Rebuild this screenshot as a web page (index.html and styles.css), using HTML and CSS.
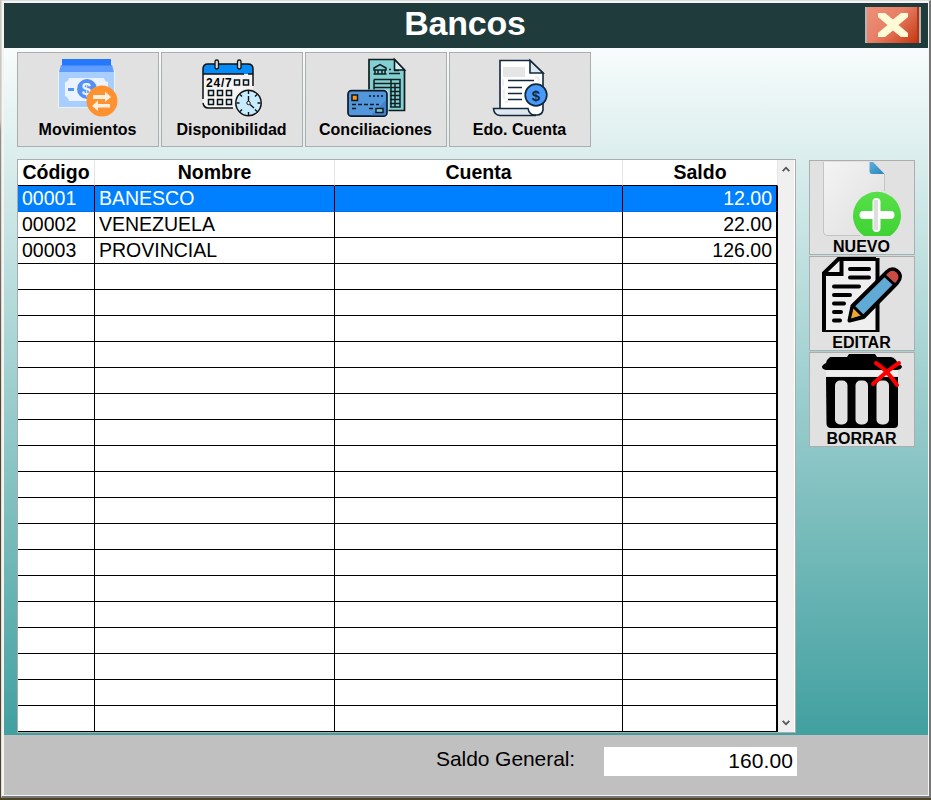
FILE: index.html
```html
<!DOCTYPE html>
<html lang="es">
<head>
<meta charset="utf-8">
<title>Bancos</title>
<link rel="stylesheet" href="styles.css">
</head>
<body>
<div class="window">
  <header class="titlebar">
    <h1>Bancos</h1>
    <button class="close" aria-label="Cerrar">
      <svg width="30" height="24" viewBox="0 0 30 24"><path d="M0 0H7L15 6.500 23 0H30V4L20.500 12 30 20V24H23L15 17.500 7 24H0V20L9.500 12 0 4Z" fill="#fffbd6"/></svg>
    </button>
  </header>
  <main class="body">
    <nav class="toolbar">
      <button class="tool">
        <svg width="64" height="64" viewBox="6 6 64 64">
          <path d="M8.500 20.500H64.500V57.500H8.500Z" fill="#a8cdff" stroke="#e9f3ff"/>
          <path d="M11 15H62L64 22H9Z" fill="#5f9cff"/>
          <path d="M12 9H61V15.500H12Z" fill="#2578fc"/>
          <path d="M19 28H54Q55 32 58 32V47Q55 47 54 51H19Q18 47 15 46V32Q18 32 19 28Z" fill="#eaf3ff"/>
          <path d="M18 38H24V41H18Z" fill="#5590f4"/>
          <circle cx="37" cy="39" r="10" fill="#5590f4"/>
          <text x="36.500" y="45" class="coin-light">$</text>
          <circle cx="52" cy="51" r="15.500" fill="#ff9230"/>
          <path d="M43 45H55V41.500L61 47 55 52V49H43ZM60 54H48V50.500L42 56 48 61V57.500H60Z" fill="#fff0df"/>
        </svg>
        <span>Movimientos</span>
      </button>
      <button class="tool">
        <svg width="64" height="64" viewBox="5 6 64 64">
          <path d="M13 14H53Q58 14 58 19V44L46 58H13Q8 58 8 53V19Q8 14 13 14Z" fill="#f5f5f5"/>
          <path d="M8 24V19Q8 14 13 14H53Q58 14 58 19V24Z" fill="#068cf8"/>
          <path d="M8 49V19Q8 14 13 14H53Q58 14 58 19V36M8 24H49M53 24H58M8 53Q9 58 13 58H38" fill="none" stroke="#111" stroke-width="1.500"/>
          <g fill="#d8d8d8" stroke="#111" stroke-width="1.300"><rect x="20" y="10" width="3.500" height="9" rx="1.700"/><rect x="42.500" y="10" width="3.500" height="9" rx="1.700"/></g>
          <text x="11" y="36.500" class="hours">24/7</text>
          <g fill="#d8f3ff" stroke="#111" stroke-width="1.500"><path d="M39.500 30H44.500V35H39.500ZM48.500 30H53.500V35H48.500ZM13.500 40.500H18.500V45.500H13.500ZM22.500 40.500H27.500V45.500H22.500ZM31.500 40.500H36.500V45.500H31.500ZM13.500 49.500H18.500V54.500H13.500ZM22.500 49.500H27.500V54.500H22.500ZM31.500 49.500H36.500V54.500H31.500Z"/></g>
          <circle cx="53.500" cy="53" r="14" fill="#eee"/>
          <circle cx="53.500" cy="53" r="12.700" fill="#c8ecff" stroke="#111" stroke-width="1.500"/>
          <path d="M53.500 41V44M53.500 62V65M41.500 53H44.500M62.500 53H65.500M45 44.500L47 46.500M62 44.500L60 46.500M45 61.500L47 59.500M62 61.500L60 59.500M53.500 46V51.500M55 54.500L59 58" stroke="#111" stroke-width="1.400"/>
          <circle cx="53.500" cy="53" r="1.700" fill="#fff" stroke="#111"/>
        </svg>
        <span>Disponibilidad</span>
      </button>
      <button class="tool">
        <svg width="64" height="64" viewBox="4 6 64 64">
          <path d="M29 9.500H54.500L64.500 20V60.500H29Z" fill="#82d0d2" stroke="#101e20" stroke-width="1.700"/>
          <path d="M54.500 9.500V20H64.500Z" fill="#d8f0f2" stroke="#101e20" stroke-width="1.600"/>
          <path d="M34 18L40 14.500 46 18V20H34ZM35 20V24M38 20V24M42 20V24M45 20V24M33.500 24H46.500M49 19.500H51M49 23.500H60M54 20.500H59M34 29.500H60V57H50M34 29.500V40M34 33.500H60M34 37.500H60M50 41.500H60M50 45.500H60M50 49.500H60M50 53.500H60M51 29.500V57M55 33.500V57" fill="none" stroke="#101e20" stroke-width="1.500"/>
          <rect x="7" y="39.500" width="41.500" height="28" rx="4" fill="#dff0ff"/>
          <rect x="8" y="40.700" width="39" height="25.500" rx="3.500" fill="#5297dc" stroke="#111722" stroke-width="1.700"/>
          <path d="M31 65.300L46 50V63Q46 65.300 44 65.300Z" fill="#4281cd"/>
          <rect x="12" y="45" width="5.500" height="5.500" fill="#ff9616" stroke="#111722" stroke-width="1.500"/>
          <path d="M29 46H43" stroke="#111722" stroke-width="1.500" stroke-dasharray="2 2"/>
          <path d="M12 54.500H39M12 58.500H16M29 58.500H33" stroke="#111722" stroke-width="1.500" stroke-dasharray="4 2"/>
          <rect x="36" y="58.500" width="7" height="4" fill="#7fd0cd" stroke="#111722" stroke-width="1.400"/>
        </svg>
        <span>Conciliaciones</span>
      </button>
      <button class="tool">
        <svg width="64" height="64" viewBox="3 6 64 64">
          <path d="M15 10.500H45L58 23V60Q57 65 52 65H15Z" fill="#fff" stroke="#12283c" stroke-width="1.600"/>
          <path d="M45 10.500V23H58Z" fill="#dfe7ef" stroke="#12283c" stroke-width="1.600"/>
          <path d="M18 17H40V27H18Z" fill="#e5e5e5"/>
          <path d="M18 29V36M19 39V49M20 52H23M50 27H53V30H55" fill="none" stroke="#e0e0e0"/>
          <path d="M8.500 58.500H43Q44 65 51 65.500H15Q9 65 8.500 58.500Z" fill="#dfe7ef" stroke="#12283c" stroke-width="1.600"/>
          <path d="M23 30.500H49M23 37.500H37M23 43.500H37M23 49.500H37" stroke="#12283c" stroke-width="1.600"/>
          <circle cx="51" cy="45" r="10.800" fill="#489afa" stroke="#12283c" stroke-width="1.700"/>
          <text x="51" y="50.500" class="coin-dark">$</text>
        </svg>
        <span>Edo. Cuenta</span>
      </button>
    </nav>
    <section class="content">
      <div class="grid">
        <table>
          <colgroup><col class="c1"><col class="c2"><col class="c3"><col class="c4"></colgroup>
          <thead><tr><th>Código</th><th>Nombre</th><th>Cuenta</th><th>Saldo</th></tr></thead>
          <tbody>
            <tr class="selected"><td>00001</td><td>BANESCO</td><td></td><td>12.00</td></tr>
            <tr><td>00002</td><td>VENEZUELA</td><td></td><td>22.00</td></tr>
            <tr><td>00003</td><td>PROVINCIAL</td><td></td><td>126.00</td></tr>
            <tr><td></td><td></td><td></td><td></td></tr>
            <tr><td></td><td></td><td></td><td></td></tr>
            <tr><td></td><td></td><td></td><td></td></tr>
            <tr><td></td><td></td><td></td><td></td></tr>
            <tr><td></td><td></td><td></td><td></td></tr>
            <tr><td></td><td></td><td></td><td></td></tr>
            <tr><td></td><td></td><td></td><td></td></tr>
            <tr><td></td><td></td><td></td><td></td></tr>
            <tr><td></td><td></td><td></td><td></td></tr>
            <tr><td></td><td></td><td></td><td></td></tr>
            <tr><td></td><td></td><td></td><td></td></tr>
            <tr><td></td><td></td><td></td><td></td></tr>
            <tr><td></td><td></td><td></td><td></td></tr>
            <tr><td></td><td></td><td></td><td></td></tr>
            <tr><td></td><td></td><td></td><td></td></tr>
            <tr><td></td><td></td><td></td><td></td></tr>
            <tr><td></td><td></td><td></td><td></td></tr>
            <tr><td></td><td></td><td></td><td></td></tr>
          </tbody>
        </table>
        <div class="scrollbar">
          <svg width="8" height="6" viewBox="0 0 8 6"><path d="M.7 5.200L4 1.700 7.300 5.200" fill="none" stroke="#555" stroke-width="1.800"/></svg>
          <svg width="8" height="6" viewBox="0 0 8 6"><path d="M.7 .8L4 4.300 7.300 .8" fill="none" stroke="#555" stroke-width="1.800"/></svg>
        </div>
      </div>
      <aside class="actions">
        <button class="action">
          <svg width="82" height="76" viewBox="51 161 82 76">
            <defs>
              <linearGradient id="paper" x2="1" y2="1"><stop stop-color="#f4f4f4"/><stop offset="1" stop-color="#dedede"/></linearGradient>
              <linearGradient id="green" x2="0" y2="1"><stop stop-color="#58e04a"/><stop offset="1" stop-color="#3fd233"/></linearGradient>
              <linearGradient id="fold" x2="1" y2="1"><stop stop-color="#5bb0dc"/><stop offset="1" stop-color="#2c84b8"/></linearGradient>
            </defs>
            <path d="M53.500 162H100L114.500 174V235.500H56Q53.500 235 53.500 232Z" fill="url(#paper)"/>
            <path d="M53.500 162V232Q53.500 235.500 57 235.500H90M114.500 174V191" fill="none" stroke="#c4c4c4"/>
            <path d="M99.500 162H103L114.500 174H102Q99.500 174 99.500 171Z" fill="url(#fold)"/>
            <path d="M94 236A24 24 0 1 1 120 236Z" fill="url(#green)"/>
            <path d="M106.500 202V228M93.500 215H120.500" stroke="#fff" stroke-width="8" stroke-linecap="round"/>
            <path d="M106 200V230" stroke="#dedede" stroke-width="4"/>
          </svg>
          <span>NUEVO</span>
        </button>
        <button class="action">
          <svg width="82" height="76" viewBox="51 17 82 76">
            <path d="M54 33L68.500 19H107.500V91H54Z" fill="#efefef"/>
            <path d="M54 91V33L68.500 19H106M71.500 19V34H54" fill="none" stroke="#000" stroke-width="4"/>
            <path d="M107.500 18V92" stroke="#000" stroke-width="4"/>
            <path d="M52 91H109" stroke="#000" stroke-width="2"/>
            <path d="M80 29H99M80 37.500H99M64 46.500H89M64 55H80M64 63.500H74M64 72H71M64 80.500H70" stroke="#000" stroke-width="4" stroke-linecap="round"/>
            <path d="M82.500 66L117 32Q122 27 127 31 133 36 127 43L93.500 77 79.500 80.500Z" fill="#61aad5" stroke="#000" stroke-width="4" stroke-linejoin="round"/>
            <path d="M118 33Q122 29 126.500 32.500 130.500 37 126.500 41.500L125 43 116 35Z" fill="#cd4a42"/>
            <path d="M84 66.500L91.500 75 81 78.500Z" fill="#f1a52e"/>
            <path d="M83 66L93 76M114 35L125 45" stroke="#000" stroke-width="3"/>
          </svg>
          <span>EDITAR</span>
        </button>
        <button class="action">
          <svg width="82" height="76" viewBox="51 113 82 76">
            <path d="M60 117H77L79 114H105L107 117H121Q126 118 128 124Q132 125 132 127Q131 130 126 130H56Q52 129 52 127Q52 125 56 123Q57 119 60 117Z"/>
            <path d="M56 130.500H128V136H56Z" fill="#eee"/>
            <path d="M56 137H128V184Q128 188 124 188H61Q57 188 56.500 184Z"/>
            <g fill="#e2e2e2"><rect x="65" y="140.500" width="12.500" height="44" rx="5"/><rect x="85.500" y="140.500" width="12.500" height="44" rx="5"/><rect x="106.500" y="140.500" width="12.500" height="44" rx="5"/></g>
            <path d="M106 123Q117 130 127 145M129 123Q118 130 103 144" fill="none" stroke="#f00" stroke-width="4" stroke-linecap="round"/>
          </svg>
          <span>BORRAR</span>
        </button>
      </aside>
    </section>
  </main>
  <footer class="summary">
    <label for="total">Saldo General:</label>
    <output id="total">160.00</output>
  </footer>
</div>
</body>
</html>
```
FILE: styles.css
```css
* { box-sizing: border-box; }

body {
  margin: 0;
  height: 800px;
  overflow: hidden;
  padding: 0 0 2px 1px;
  background: linear-gradient(#c9c8b5 0, #c9c8b5 120px, #8f948c 130px, #55462c 400px, #4c4228 100%);
  font-family: "Liberation Sans", Arial, sans-serif;
  color: #000;
}

button {
  margin: 0;
  padding: 0;
  font: inherit;
  color: inherit;
}

svg { display: block; flex: none; }

.window {
  display: flex;
  flex-direction: column;
  width: 930px;
  height: 798px;
  border-style: solid;
  border-width: 1px 2px 2px 1px;
  border-color: #dcdcdc #777 #777 #dcdcdc;
  padding: 2px 1px 1px 2px;
  background: #f4f4f4;
}

.titlebar {
  display: flex;
  flex: none;
  height: 45px;
  padding: 4px 7px 0 0;
  background: #1f3b3c;
}

.titlebar h1 {
  flex: 1;
  margin: -4px -63px 0 0;
  padding-right: 2px;
  font-size: 34px;
  line-height: 41px;
  letter-spacing: -0.2px;
  text-align: center;
  color: #fff;
}

.close {
  display: flex;
  align-items: center;
  justify-content: center;
  width: 56px;
  height: 36px;
  margin-left: auto;
  border: solid #b4b4b4;
  border-width: 0 2px;
  background: linear-gradient(135deg, #ef9079 0, #e77f66 45%, #c93a12 95%);
  box-shadow: inset -2px 0 #ad371a;
}

.body {
  display: flex;
  flex-direction: column;
  flex: none;
  gap: 12px;
  height: 687px;
  padding: 4px 13px 0;
  background: linear-gradient(#f8fcfc, #42a0a0);
}

.toolbar { display: flex; gap: 2px; }

.tool, .action {
  display: flex;
  flex-direction: column;
  align-items: center;
  height: 95px;
  border: 1px solid #adadad;
  background: #e1e1e1;
  font-size: 16px;
  font-weight: bold;
  line-height: 20px;
}

.tool { width: 142px; padding-top: 3px; }

.tool span, .action span { margin-right: 1px; }

.content { display: flex; gap: 13px; }

.grid {
  display: flex;
  width: 779px;
  height: 574px;
  border: 1px solid #a9adb0;
  background: #fff;
}

table {
  width: 760px;
  height: 572px;
  table-layout: fixed;
  border-collapse: separate;
  border-spacing: 0;
  font-size: 19.5px;
  line-height: 24px;
}

.c1 { width: 77px; }
.c2 { width: 240px; }
.c3 { width: 288px; }
.c4 { width: 155px; }

th {
  height: 26px;
  padding: 0 0 1px;
  border-right: 1px solid #e5e5e5;
  border-bottom: 1px solid #000;
}

td {
  height: 26px;
  padding: 0 4px 1px;
  border-right: 1px solid #000;
  border-bottom: 1px solid #000;
  white-space: nowrap;
}

td:last-child { border-right-width: 2px; text-align: right; }

.selected { background: #0080ff; color: #fff; }
.selected td { border-bottom-color: #0070dc; }

.scrollbar {
  display: flex;
  flex-direction: column;
  align-items: center;
  justify-content: space-between;
  width: 17px;
  padding: 6px 1px 6px 0;
  border-right: 1px solid #fff;
  background: #f0f0f0;
}

.actions {
  display: flex;
  flex-direction: column;
  gap: 1px;
  padding-top: 1px;
}

.action { width: 106px; }

.summary {
  display: flex;
  flex: 1;
  align-items: flex-start;
  padding: 12px 131px 0 432px;
  background: #c0c0c0;
  font-size: 21px;
}

.summary label { flex: 1; line-height: 24px; letter-spacing: -0.07px; }

.summary output {
  width: 193px;
  height: 29px;
  padding-right: 4px;
  background: #fff;
  line-height: 27px;
  letter-spacing: 0.1px;
  text-align: right;
}

.coin-light { font-size: 17px; font-weight: bold; fill: #edf5ff; text-anchor: middle; }
.coin-dark { font-size: 15px; font-weight: bold; fill: #12283c; text-anchor: middle; }
.hours { font-size: 12px; font-weight: bold; letter-spacing: 0.8px; }
```
